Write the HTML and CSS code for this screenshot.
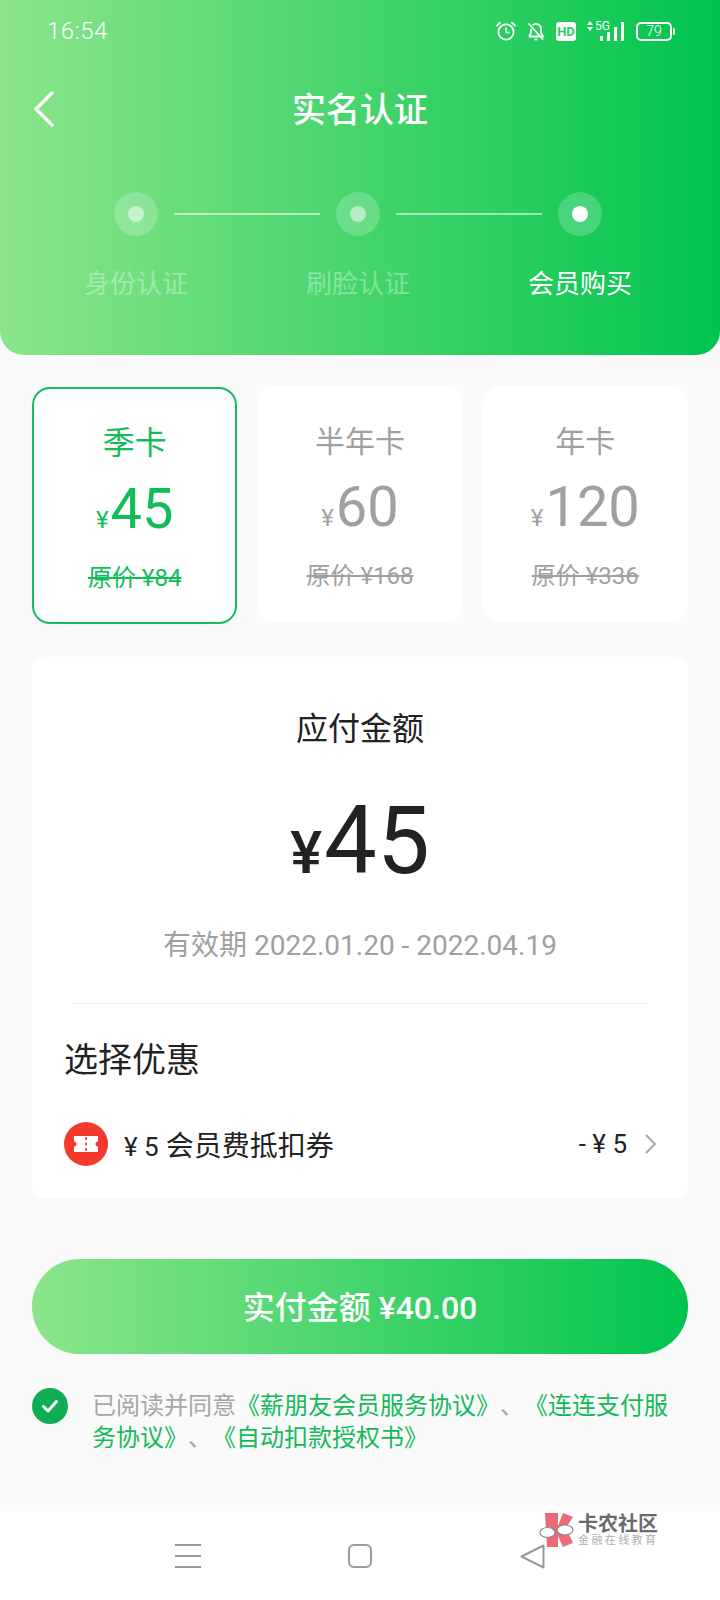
FILE: index.html
```html
<!DOCTYPE html>
<html lang="zh-CN">
<head>
    <meta charset="UTF-8">
    <meta name="viewport" content="width=device-width, initial-scale=1.0">
    <title>实名认证</title>
    <link rel="stylesheet" href="styles.css">
</head>
<body>
<div class="page">
    <header class="header">
        <div class="status">
            <span class="time">16:54</span>
            <div class="status-icons">
                <svg class="ic-alarm" width="20" height="20" viewBox="0 0 20 20" fill="none" stroke="#fff" stroke-width="1.8">
                    <circle cx="10" cy="11" r="7.6"/>
                    <path d="M10 6.5V11.5H13.5" stroke-width="1.5"/>
                    <path d="M1 4.5 4 1.6M19 4.5 16 1.6" stroke-linecap="round"/>
                </svg>
                <svg class="ic-bell" width="18" height="20" viewBox="0 0 18 20" fill="none" stroke="#fff" stroke-width="1.8">
                    <path d="M2 15.5H16L14 12V8A5 5 0 0 0 5.5 4.4M4 8V12L2 15.5"/>
                    <path d="M2 3 15.5 18" stroke-linecap="round"/>
                    <path d="M7.5 18.5H10.5"/>
                </svg>
                <span class="ic-hd">HD</span>
                <div class="signal">
                    <svg class="arrows" width="6" height="10" viewBox="0 0 6 10" fill="#fff">
                        <path d="M3 0 6 4H0ZM3 10 0 6H6Z"/>
                    </svg>
                    <span class="five-g">5G</span>
                    <div class="bars">
                        <i class="bar b1"></i><i class="bar b2"></i><i class="bar b3"></i><i class="bar b4"></i>
                    </div>
                </div>
                <div class="battery"><span>79</span></div>
            </div>
        </div>
        <div class="titlebar">
            <svg class="back" width="22" height="36" viewBox="0 0 22 36" fill="none" stroke="#fff" stroke-width="3.4" stroke-linecap="round" stroke-linejoin="round">
                <path d="M19 2 3 18 19 34"/>
            </svg>
            <h1>实名认证</h1>
        </div>
        <div class="track">
            <div class="dot"><i></i></div>
            <div class="line"></div>
            <div class="dot"><i></i></div>
            <div class="line"></div>
            <div class="dot on"><i></i></div>
        </div>
        <div class="labels">
            <span>身份认证</span>
            <span>刷脸认证</span>
            <span class="on">会员购买</span>
        </div>
    </header>

    <section class="plans">
        <div class="plan selected">
            <div class="plan-name">季卡</div>
            <div class="plan-price"><small>¥</small>45</div>
            <div class="plan-old">原价 ¥84</div>
        </div>
        <div class="plan">
            <div class="plan-name">半年卡</div>
            <div class="plan-price"><small>¥</small>60</div>
            <div class="plan-old">原价 ¥168</div>
        </div>
        <div class="plan">
            <div class="plan-name">年卡</div>
            <div class="plan-price"><small>¥</small>120</div>
            <div class="plan-old">原价 ¥336</div>
        </div>
    </section>

    <section class="summary">
        <div class="due-label">应付金额</div>
        <div class="due-amount"><small>¥</small>45</div>
        <div class="due-date">有效期 2022.01.20 - 2022.04.19</div>
        <div class="divider"></div>
        <div class="promo-title">选择优惠</div>
        <div class="coupon">
            <svg class="coupon-icon" width="44" height="44" viewBox="0 0 44 44">
                <circle cx="22" cy="22" r="22" fill="#f4392d"/>
                <path d="M10 14H34V19.5A2.5 2.5 0 0 0 34 24.5V30H10V24.5A2.5 2.5 0 0 0 10 19.5Z" fill="#fff"/>
                <path d="M22 15V29" stroke="#f4392d" stroke-width="1.6" stroke-dasharray="3 2.5"/>
            </svg>
            <span class="coupon-name"><b>¥ 5</b> 会员费抵扣券</span>
            <span class="coupon-value">- ¥ 5</span>
            <svg class="chevron" width="13" height="22" viewBox="0 0 13 22" fill="none" stroke="#a5a5a5" stroke-width="1.8">
                <path d="M2 2 11 11 2 20"/>
            </svg>
        </div>
    </section>

    <button class="pay">实付金额 ¥40.00</button>

    <div class="agree">
        <svg class="check" width="36" height="36" viewBox="0 0 36 36">
            <circle cx="18" cy="18" r="18" fill="#0fae56"/>
            <path d="M11.5 18.5 16 23 24.5 13.5" fill="none" stroke="#fff" stroke-width="3" stroke-linecap="round" stroke-linejoin="round"/>
        </svg>
        <p>已阅读并同意<a>《薪朋友会员服务协议》</a>、<a>《连连支付服</a><a>务协议》</a>、<a>《自动扣款授权书》</a></p>
    </div>

    <nav class="sysnav">
        <svg width="26" height="24" viewBox="0 0 26 24" fill="#999">
            <rect y="0" width="26" height="2"/>
            <rect y="11" width="26" height="2"/>
            <rect y="22" width="26" height="2"/>
        </svg>
        <svg width="24" height="24" viewBox="0 0 24 24" fill="none" stroke="#999" stroke-width="2">
            <rect x="1" y="1" width="22" height="22" rx="5"/>
        </svg>
        <svg width="25" height="25" viewBox="0 0 25 25" fill="none" stroke="#999" stroke-width="2" stroke-linejoin="round">
            <path d="M23.5 1.5V23.5L1.5 12.5Z"/>
        </svg>
        <div class="mark">
            <svg width="36" height="36" viewBox="0 0 36 36">
                <path d="M6 0H19V13L24 0 34 4 27 15 34 30 24 34 19 23V34H8Z" fill="#ec6a78"/>
                <ellipse cx="8.5" cy="19.5" rx="7.5" ry="5" fill="#fff" stroke="#8a8a8a" stroke-width="1.2"/>
                <ellipse cx="26" cy="17" rx="8" ry="5" fill="#fff" stroke="#8a8a8a" stroke-width="1.2"/>
            </svg>
            <div class="mark-text">
                <strong>卡农社区</strong>
                <span>金融在线教育</span>
            </div>
        </div>
    </nav>
</div>
</body>
</html>
```

FILE: styles.css
```css
* {
    box-sizing: border-box;
}
html, body {
    margin: 0;
    padding: 0;
}
body {
    font-family: Roboto, "Noto Sans CJK SC", sans-serif;
    background: #fafafa;
    color: #222;
}
.page {
    width: 720px;
    height: 1600px;
    display: flex;
    flex-direction: column;
    overflow: hidden;
}

/* header */
.header {
    height: 355px;
    background: linear-gradient(90deg, #8be58b, #00c44e);
    border-radius: 0 0 24px 24px;
    color: #fff;
    flex: none;
}
.status {
    height: 62px;
    display: flex;
    align-items: center;
    justify-content: space-between;
    padding: 0 48px 0 47px;
}
.time {
    font-size: 24px;
    font-weight: 300;
    letter-spacing: 0.5px;
}
.status-icons {
    display: flex;
    align-items: center;
}
.ic-alarm {
    margin-right: 11px;
}
.ic-bell {
    margin-right: 11px;
}
.ic-hd {
    width: 20px;
    height: 19px;
    background: #fff;
    border-radius: 3px;
    color: #2bcf61;
    font-size: 13px;
    font-weight: 700;
    line-height: 19px;
    text-align: center;
    margin-right: 11px;
}
.signal {
    width: 37px;
    height: 20px;
    position: relative;
    margin-right: 12px;
}
.arrows {
    position: absolute;
    left: 0;
    top: 0;
}
.five-g {
    position: absolute;
    left: 8px;
    top: 0;
    font-size: 12px;
    line-height: 11px;
}
.bars {
    position: absolute;
    right: 0;
    bottom: 0;
    display: flex;
    align-items: flex-end;
    gap: 4px;
}
.bar {
    display: block;
    width: 3px;
    background: #fff;
}
.b1 { height: 5px; }
.b2 { height: 9px; }
.b3 { height: 14px; }
.b4 { height: 19px; }
.battery {
    width: 36px;
    height: 19px;
    border: 2px solid #fff;
    border-radius: 5px;
    position: relative;
    font-size: 14px;
    font-weight: 300;
    line-height: 15px;
    text-align: center;
}
.battery::after {
    content: "";
    position: absolute;
    right: -5px;
    top: 4px;
    width: 2px;
    height: 7px;
    background: #fff;
    border-radius: 0 2px 2px 0;
}
.titlebar {
    height: 90px;
    display: flex;
    align-items: center;
    justify-content: center;
    position: relative;
}
.titlebar h1 {
    margin: 0;
    font-size: 34px;
    font-weight: 500;
}
.back {
    position: absolute;
    left: 33px;
    top: 29px;
}
.track {
    display: flex;
    align-items: center;
    gap: 16px;
    padding-left: 114px;
    margin-top: 40px;
}
.dot {
    width: 44px;
    height: 44px;
    border-radius: 50%;
    background: rgba(255, 255, 255, 0.2);
    display: flex;
    align-items: center;
    justify-content: center;
}
.dot i {
    width: 16px;
    height: 16px;
    border-radius: 50%;
    background: rgba(255, 255, 255, 0.5);
}
.dot.on i {
    background: #fff;
}
.line {
    width: 146px;
    height: 2px;
    background: rgba(255, 255, 255, 0.55);
}
.labels {
    display: grid;
    grid-template-columns: repeat(3, 222px);
    padding-left: 25px;
    margin-top: 30px;
    font-size: 26px;
    line-height: 36px;
    text-align: center;
    color: rgba(255, 255, 255, 0.35);
}
.labels .on {
    color: #fff;
}

/* plans */
.plans {
    display: grid;
    grid-template-columns: repeat(3, 1fr);
    gap: 20px;
    padding: 0 32px;
    margin-top: 31px;
    align-items: start;
}
.plan {
    height: 236px;
    background: #fff;
    border-radius: 18px;
    padding-top: 36px;
    text-align: center;
    color: #a0a0a0;
}
.plan.selected {
    height: 237px;
    margin-top: 1px;
    border: 2px solid #1dbb60;
    color: #12bc58;
    padding-top: 34px;
}
.plan-name {
    font-size: 30px;
    line-height: 40px;
}
.selected .plan-name {
    font-size: 32px;
}
.plan-price {
    font-size: 56px;
    line-height: 66px;
    margin-top: 12px;
}
.selected .plan-price {
    margin-top: 13px;
}
.plan-price small {
    font-size: 24px;
    line-height: 1;
    margin-right: 2px;
}
.plan-old {
    font-size: 24px;
    line-height: 32px;
    margin-top: 20px;
    text-decoration: line-through;
}

/* summary */
.summary {
    margin: 33px 32px 0;
    background: #fff;
    border-radius: 12px;
    padding: 52px 32px 32px;
    flex: none;
}
.due-label {
    font-size: 32px;
    line-height: 40px;
    text-align: center;
}
.due-amount {
    font-size: 94px;
    line-height: 100px;
    margin-top: 42px;
    text-align: center;
}
.due-amount small {
    font-size: 60px;
    font-weight: 500;
    line-height: 1;
    margin-right: 2px;
}
.due-date {
    font-size: 28px;
    line-height: 40px;
    margin-top: 35px;
    text-align: center;
    color: #a0a0a0;
}
.divider {
    height: 1px;
    background: #eee;
    margin: 37px 8px 0;
}
.promo-title {
    font-size: 34px;
    line-height: 44px;
    margin-top: 34px;
}
.coupon {
    display: flex;
    align-items: center;
    height: 44px;
    margin-top: 40px;
}
.coupon-name {
    font-size: 28px;
    margin-left: 16px;
    flex: 1;
}
.coupon-name b {
    font-size: 26px;
    font-weight: 400;
}
.coupon-value {
    font-size: 26px;
}
.chevron {
    margin-left: 17px;
    margin-right: -1px;
}

/* pay button */
.pay {
    display: block;
    flex: none;
    margin: 61px 32px 0;
    width: 656px;
    height: 95px;
    border: 0;
    border-radius: 48px;
    background: linear-gradient(90deg, #8be58b, #00c44e);
    color: #fff;
    font-family: inherit;
    font-size: 32px;
    font-weight: 500;
    padding-bottom: 4px;
}

/* agreement */
.agree {
    display: flex;
    gap: 24px;
    padding: 0 32px;
    margin-top: 34px;
}
.check {
    flex: none;
}
.agree p {
    margin: 2px 0 0;
    font-size: 24px;
    line-height: 32px;
    color: #a6a6a6;
    text-spacing-trim: space-all;
    font-feature-settings: "palt" 0, "chws" 0, "kern" 0;
}
.agree a {
    color: #14b95b;
}

/* bottom bar */
.sysnav {
    margin-top: auto;
    height: 89px;
    background: #fff;
    display: flex;
    align-items: flex-start;
    padding: 33px 0 0 175px;
    position: relative;
    flex: none;
}
.sysnav svg:nth-child(2) {
    margin-left: 147px;
}
.sysnav svg:nth-child(3) {
    margin-left: 148px;
}
.mark {
    position: absolute;
    left: 539px;
    top: 2px;
    display: flex;
    gap: 3px;
}
.mark svg {
    margin: 0;
}
.mark-text {
    display: flex;
    flex-direction: column;
}
.mark-text strong {
    font-size: 20px;
    line-height: 22px;
    color: #6b6b6b;
    white-space: nowrap;
}
.mark-text span {
    font-size: 11px;
    line-height: 12px;
    letter-spacing: 2.4px;
    color: #b0b0b0;
    white-space: nowrap;
}
```
